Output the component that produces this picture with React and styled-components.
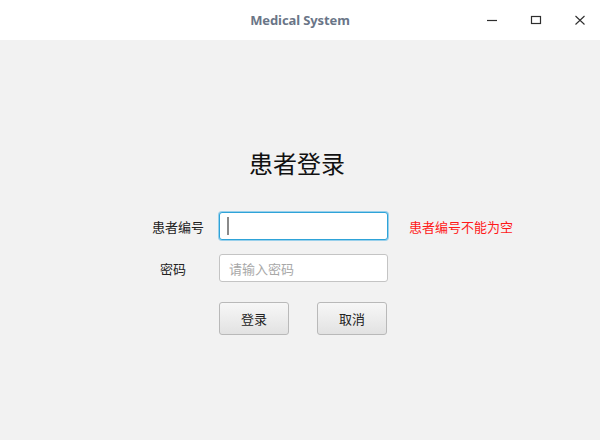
import React from "react";
import styled, { createGlobalStyle } from "styled-components";

const Global = createGlobalStyle`
  html, body { margin: 0; padding: 0; background: #f2f2f2; }
  body { font-family: "Noto Sans", "Noto Sans CJK SC", sans-serif; }
  * { box-sizing: border-box; }
`;

const Window = styled.div`
  width: 600px;
  height: 440px;
  display: flex;
  flex-direction: column;
  background: #f2f2f2;
  overflow: hidden;
`;

const TitleBar = styled.div`
  height: 40px;
  flex: none;
  background: #ffffff;
  display: grid;
  grid-template-columns: 1fr auto 1fr;
  align-items: center;
`;

const WindowTitle = styled.div`
  grid-column: 2;
  font-family: "Noto Sans", sans-serif;
  font-weight: 700;
  font-size: 13px;
  color: #6a7587;
  letter-spacing: -0.1px;
`;

const Controls = styled.div`
  grid-column: 3;
  justify-self: end;
  display: flex;
  align-items: center;
  margin-right: -2px;
`;

const Ctrl = styled.div`
  width: 44px;
  height: 40px;
  display: flex;
  align-items: center;
  justify-content: center;
  color: #2e2e2e;
`;

const Body = styled.div`
  flex: 1;
  display: flex;
  flex-direction: column;
  padding-top: 108px;
`;

const Heading = styled.h1`
  margin: 0;
  padding-right: 6px;
  text-align: center;
  font-family: "Noto Sans CJK SC", sans-serif;
  font-weight: 400;
  font-size: 24px;
  line-height: 30px;
  color: #111;
`;

const Form = styled.div`
  margin-top: 34px;
  margin-left: 134px;
  display: grid;
  grid-template-columns: 70px 169px auto;
  column-gap: 15px;
  row-gap: 14px;
  align-items: center;
`;

const Label = styled.label`
  justify-self: end;
  margin-right: ${(p) => p.$inset || 0}px;
  font-family: "Noto Sans CJK SC", sans-serif;
  font-size: 13px;
  color: #222;
`;

const Field = styled.div`
  position: relative;
  height: 28px;
`;

const Input = styled.input`
  width: 100%;
  height: 100%;
  margin: 0;
  padding: 0 9px;
  border-radius: 3px;
  border: 1px solid ${(p) => (p.$focused ? "#2ea3d8" : "#c4c4c4")};
  box-shadow: ${(p) => (p.$focused ? "0 0 0 1px rgba(80,180,230,0.55)" : "none")};
  background: #ffffff;
  outline: none;
  caret-color: transparent;
  font-family: "Noto Sans CJK SC", sans-serif;
  font-size: 13px;
  color: #222;
  &::placeholder { color: #a8a8a8; }
`;

const Caret = styled.span`
  position: absolute;
  left: 8px;
  top: 5px;
  width: 2px;
  height: 18px;
  background: #8a8a8a;
`;

const Error = styled.span`
  margin-left: 6px;
  font-family: "Noto Sans CJK SC", sans-serif;
  font-size: 13px;
  color: #ff1a1a;
`;

const Buttons = styled.div`
  margin-top: 20px;
  margin-left: 219px;
  display: flex;
  gap: 28px;
`;

const Button = styled.button`
  width: 70px;
  height: 33px;
  padding: 0;
  border: 1px solid #b9b9b9;
  border-radius: 3px;
  background: linear-gradient(#f7f7f7, #e2e2e2);
  font-family: "Noto Sans CJK SC", sans-serif;
  font-size: 13px;
  color: #222;
`;

export default function App() {
  return (
    <Window>
      <Global />
      <TitleBar>
        <WindowTitle>Medical System</WindowTitle>
        <Controls>
          <Ctrl>
            <svg width="12" height="12" viewBox="0 0 12 12">
              <path d="M1 6.5h10" stroke="currentColor" strokeWidth="1.2" />
            </svg>
          </Ctrl>
          <Ctrl>
            <svg width="12" height="12" viewBox="0 0 12 12">
              <rect x="1.5" y="2.5" width="9" height="7" fill="none" stroke="currentColor" strokeWidth="1.2" />
            </svg>
          </Ctrl>
          <Ctrl>
            <svg width="12" height="12" viewBox="0 0 12 12">
              <path d="M1.5 2l9 8.5M10.5 2l-9 8.5" stroke="currentColor" strokeWidth="1.1" />
            </svg>
          </Ctrl>
        </Controls>
      </TitleBar>
      <Body>
        <Heading>患者登录</Heading>
        <Form>
          <Label>患者编号</Label>
          <Field>
            <Input $focused />
            <Caret />
          </Field>
          <Error>患者编号不能为空</Error>
          <Label $inset={18}>密码</Label>
          <Field>
            <Input type="password" placeholder="请输入密码" />
          </Field>
          <span />
        </Form>
        <Buttons>
          <Button>登录</Button>
          <Button>取消</Button>
        </Buttons>
      </Body>
    </Window>
  );
}
